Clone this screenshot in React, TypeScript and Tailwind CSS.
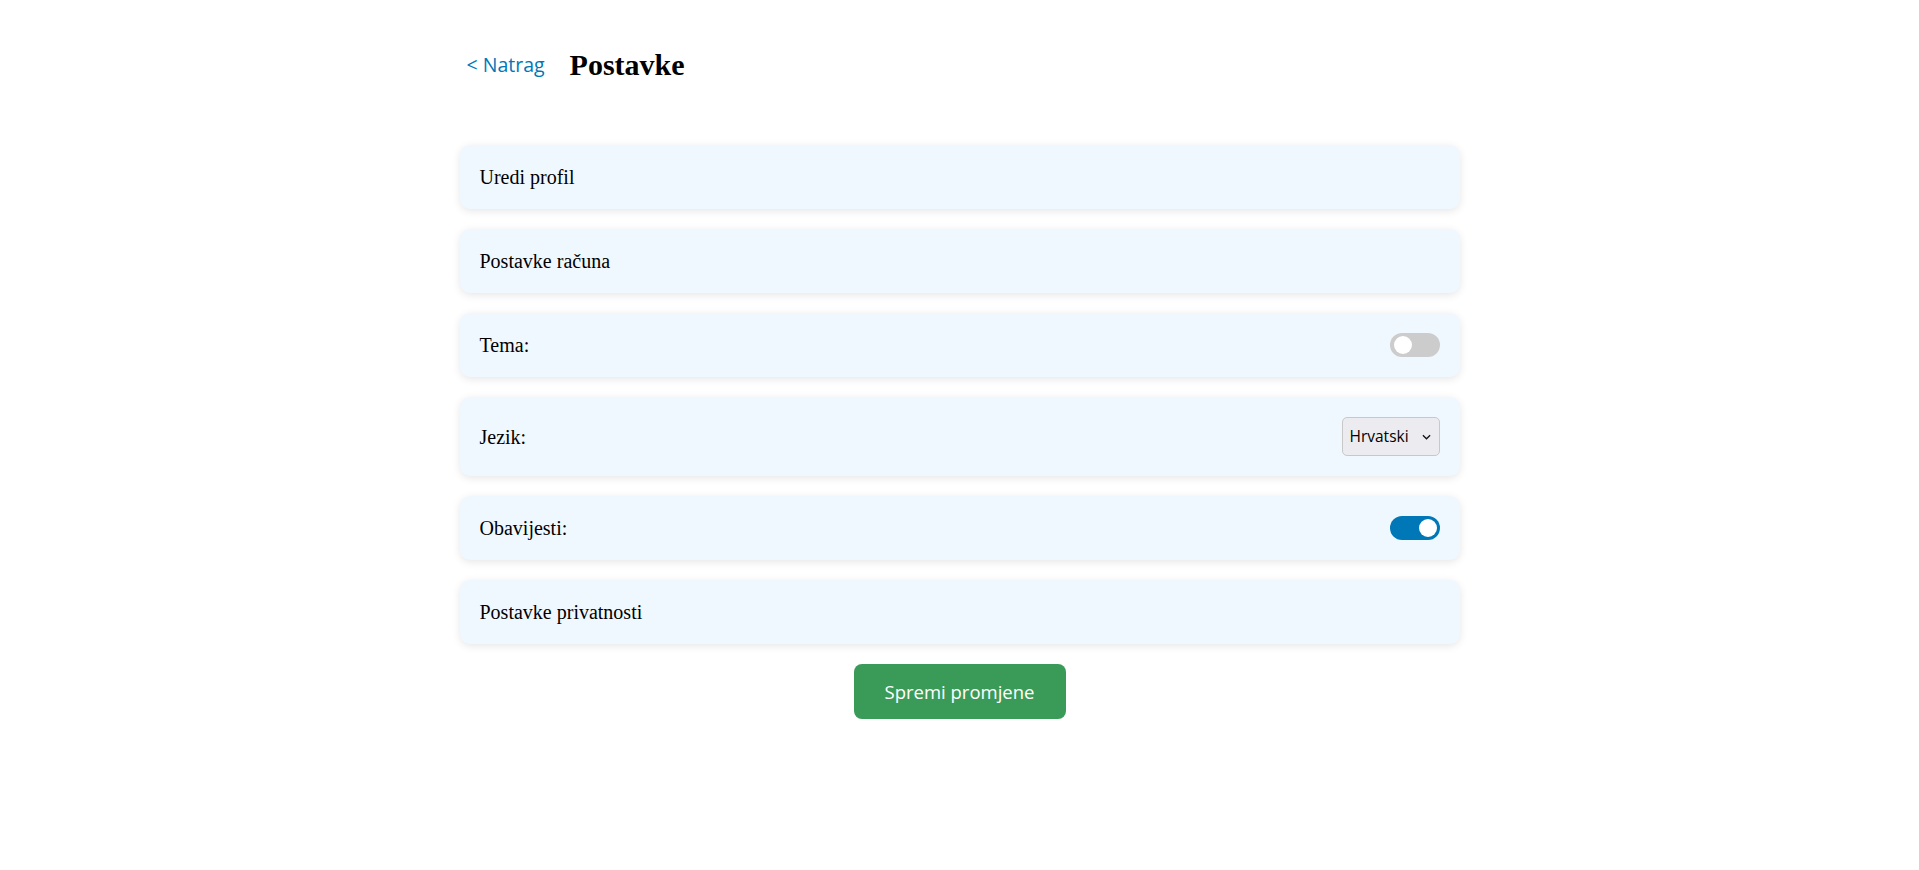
import { useState } from "react";

const serif = "font-['Liberation_Serif','Times_New_Roman',serif]";
const sans = "font-['Open_Sans','Noto_Sans',sans-serif]";

function Toggle({ on, onChange }: { on: boolean; onChange: () => void }) {
  return (
    <button
      type="button"
      role="switch"
      aria-checked={on}
      onClick={onChange}
      className={`relative h-6 w-[50px] shrink-0 rounded-full transition-colors ${
        on ? "bg-[#0077b6]" : "bg-[#cccccc]"
      }`}
    >
      <span
        className={`absolute top-[3px] size-[18px] rounded-full bg-white transition-all ${
          on ? "left-[29px]" : "left-[4px]"
        }`}
      />
    </button>
  );
}

function Row({ label, children }: { label: string; children?: React.ReactNode }) {
  return (
    <div className="flex items-center justify-between rounded-[10px] bg-[#f0f8ff] p-5 shadow-[0_2px_8px_rgba(0,0,0,0.1)]">
      <span className={`${serif} text-[20px] leading-[24px] text-black`}>{label}</span>
      {children}
    </div>
  );
}

export default function App() {
  const [theme, setTheme] = useState(false);
  const [notify, setNotify] = useState(true);
  const [lang, setLang] = useState("hr");

  return (
    <div className="min-h-screen bg-white">
      <div className="mx-auto w-[1000px] pt-[42px]">
        <div className="flex items-center gap-[25px] pl-[7px]">
          <a href="#" className={`${sans} text-[19.5px] text-[#0077b6]`}>
            &lt; Natrag
          </a>
          <h1 className={`${serif} text-[30px] font-bold text-black`}>Postavke</h1>
        </div>

        <div className="mt-[58px] flex flex-col gap-5">
          <Row label="Uredi profil" />
          <Row label="Postavke računa" />
          <Row label="Tema:">
            <Toggle on={theme} onChange={() => setTheme(!theme)} />
          </Row>
          <Row label="Jezik:">
            <div className="relative">
              <select
                value={lang}
                onChange={(e) => setLang(e.target.value)}
                className={`${sans} h-[39px] w-[98px] appearance-none rounded-[5px] border border-[#c8c8c8] bg-[#ececf0] pl-[7px] pr-6 text-[15.5px] text-black outline-none`}
              >
                <option value="hr">Hrvatski</option>
                <option value="en">English</option>
              </select>
              <svg
                viewBox="0 0 10 6"
                className="pointer-events-none absolute right-[9px] top-[17px] h-[6px] w-[9px]"
                fill="none"
                stroke="#111"
                strokeWidth="1.4"
              >
                <path d="M1 1l4 4 4-4" />
              </svg>
            </div>
          </Row>
          <Row label="Obavijesti:">
            <Toggle on={notify} onChange={() => setNotify(!notify)} />
          </Row>
          <Row label="Postavke privatnosti" />
        </div>

        <div className="mt-5 flex justify-center">
          <button
            type="button"
            className={`${sans} h-[55px] w-[212px] rounded-[8px] bg-[#3a9b59] text-[18.5px] text-white`}
          >
            Spremi promjene
          </button>
        </div>
      </div>
    </div>
  );
}
